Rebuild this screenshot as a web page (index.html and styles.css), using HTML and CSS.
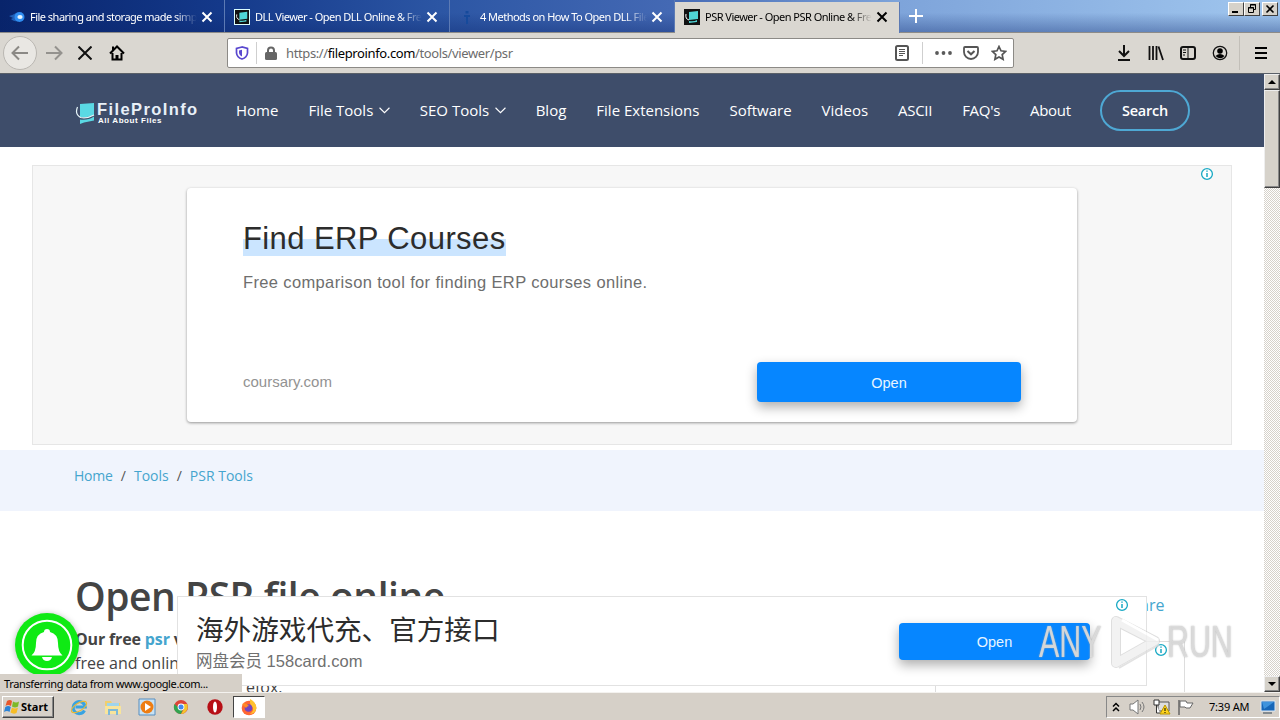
FILE: index.html
```html
<!DOCTYPE html>
<html lang="en">
<head>
<meta charset="utf-8">
<title>PSR Viewer - Open PSR Online</title>
<link rel="stylesheet" href="styles.css">
</head>
<body>
<svg class="defs" width="0" height="0">
  <defs>
    <symbol id="x" viewBox="0 0 12 12"><path d="M1.5 1.5l9 9M10.5 1.5l-9 9" fill="none" stroke="currentColor" stroke-width="2"/></symbol>
    <symbol id="fpi" viewBox="0 0 16 16"><path d="M0 0h16v16H0z" fill="#111"/><path d="M5 3l9-1v8l-9 1zM5 12q5 1 8-1v2l-8 1z" fill="#4fd5d5"/><path d="M2 5q-1 5 3 6" fill="none" stroke="#fff"/></symbol>
    <symbol id="info" viewBox="0 0 14 14"><circle cx="7" cy="7" r="5.4" fill="#fff" stroke="#19a9c4" stroke-width="1.3"/><path d="M7 6v4M7 3.4v1.4" stroke="#19a9c4" stroke-width="1.5"/></symbol>
    <symbol id="chev" viewBox="0 0 10 6"><path d="M.5.5L5 5 9.500.5" fill="none" stroke="#fff"/></symbol>
  </defs>
</svg>

<header class="tabs">
  <div class="tab tab1"><svg class="fav" viewBox="0 0 16 16"><path d="M0 7q4-1 8-3.500l1 9Q4 12 2 10l2-1z" fill="#2060b8"/><circle cx="10.500" cy="8" r="5" fill="#2f8df0"/><ellipse cx="11" cy="8" rx="2.600" ry="2" fill="#e8f6ff"/></svg><span class="title">File sharing and storage made simple</span><svg class="close"><use href="#x"/></svg></div>
  <div class="tab tab2"><svg class="fav framed"><use href="#fpi"/></svg><span class="title">DLL Viewer - Open DLL Online &amp; Free</span><svg class="close"><use href="#x"/></svg></div>
  <div class="tab tab3"><svg class="fav" viewBox="0 0 16 16"><path d="M5 6h6v2h-2v7H7V8H5zM6.500 2h3v2.500h-3z" fill="#164a9c"/></svg><span class="title">4 Methods on How To Open DLL Files</span><svg class="close"><use href="#x"/></svg></div>
  <div class="tab active"><svg class="fav"><use href="#fpi"/></svg><span class="title">PSR Viewer - Open PSR Online &amp; Free</span><svg class="close"><use href="#x"/></svg></div>
  <svg class="plus" viewBox="0 0 14 14"><path d="M7 0v14M0 7h14" stroke="#fff" stroke-width="2"/></svg>
  <div class="winbtns">
    <span class="wb"><svg viewBox="0 0 14 12"><path d="M3 9h6" stroke="#000" stroke-width="2"/></svg></span>
    <span class="wb"><svg viewBox="0 0 14 12"><path d="M5.500 4V1.500h5v5H9M5 2h6M3.500 4.500h5v5h-5zM3 5h6" fill="none" stroke="#000"/></svg></span>
    <span class="wb last"><svg viewBox="0 0 14 12"><path d="M3.500 2.500l7 7M10.500 2.500l-7 7" stroke="#000" stroke-width="1.600"/></svg></span>
  </div>
</header>

<div class="toolbar">
  <span class="back"><svg width="18" height="16" viewBox="0 0 18 16"><path d="M17 8H2M8 1.500L1.500 8 8 14.500" fill="none" stroke="#8b8985" stroke-width="2"/></svg></span>
  <svg class="fwd" width="18" height="16" viewBox="0 0 18 16"><path d="M1 8h15M10 1.500L16.500 8 10 14.500" fill="none" stroke="#94928e" stroke-width="2"/></svg>
  <svg class="stop" width="14" height="14" viewBox="0 0 14 14"><path d="M0.500.5l13 13M13.500.5l-13 13" stroke="#111" stroke-width="2"/></svg>
  <svg class="home" width="16" height="16" viewBox="0 0 16 16"><path d="M1 8.500L8 1.500l7 7M3.500 8v6.500h9V8" fill="none" stroke="#000" stroke-width="2"/><path d="M6.500 15v-5h3v5z"/><path d="M3 1.500h2v4l-2 2z"/></svg>
  <div class="urlbar">
    <svg class="shield" width="14" height="14" viewBox="0 0 14 14"><path d="M7 1L1.500 2.500V7q.5 4.500 5.500 6 5-1.500 5.500-6V2.500z" fill="#fff" stroke="#5a48cf" stroke-width="1.700"/><path d="M7 3.800V10.500Q4 9 4 6V4.500z" fill="#5a48cf"/></svg>
    <span class="vsep"></span>
    <svg class="lock" width="12" height="14" viewBox="0 0 12 14"><path d="M3 7V4.500a3 3 0 016 0V7" fill="none" stroke="#666" stroke-width="2"/><rect y="6" width="12" height="8" rx="1.500" fill="#666"/></svg>
    <span class="url">https://<b>fileproinfo.com</b>/tools/viewer/psr</span>
    <svg class="reader" width="14" height="16" viewBox="0 0 14 16"><rect x="1" y="1" width="12" height="14" rx="1.500" fill="none" stroke="#555" stroke-width="2"/><path d="M4 4.500h6M4 6.500h6M4 8.500h6M4 10.500h4" stroke="#555"/></svg>
    <span class="vsep s2"></span>
    <svg class="dots" width="17" height="4" viewBox="0 0 17 4"><g fill="#5a5a5a"><circle cx="2" cy="2" r="1.900"/><circle cx="8.500" cy="2" r="1.900"/><circle cx="15" cy="2" r="1.900"/></g></svg>
    <svg class="pocket" width="16" height="14" viewBox="0 0 16 14"><path d="M2 1h12q1 0 1 1v4a7 7 0 01-14 0V2q0-1 1-1z" fill="none" stroke="#555" stroke-width="1.800"/><path d="M4.500 5L8 8.300 11.500 5" fill="none" stroke="#555" stroke-width="2"/></svg>
    <svg class="star" width="16" height="16" viewBox="0 0 16 16"><path d="M8 1.500l2 4.300 4.700.6-3.500 3.200.9 4.700L8 12l-4.100 2.300.9-4.700L1.300 6.400 6 5.800z" fill="none" stroke="#555" stroke-width="1.700"/></svg>
  </div>
  <div class="tools">
    <svg width="14" height="16" viewBox="0 0 14 16"><path d="M7 0v11M2 6l5 5 5-5M1 15h12" fill="none" stroke="#111" stroke-width="2"/></svg>
    <svg width="16" height="16" viewBox="0 0 16 16"><path d="M1.500 1v14M5 1v14M8.500 1v14M10.500 1.500L15 15" fill="none" stroke="#111" stroke-width="1.800"/></svg>
    <svg width="16" height="14" viewBox="0 0 16 14"><rect x="1" y="1" width="14" height="12" rx="2" fill="none" stroke="#111" stroke-width="2"/><path d="M8 1v12M3 4h3M3 6.500h3M3 9h2" stroke="#111"/></svg>
    <svg width="16" height="16" viewBox="0 0 16 16"><circle cx="8" cy="8" r="6.700" fill="none" stroke="#111" stroke-width="1.300"/><circle cx="8" cy="6" r="2.800"/><path d="M3.500 11q4.500-4 9 0-4 4.500-9 0z"/></svg>
    <i class="vline"></i>
    <svg width="12" height="12" viewBox="0 0 12 12"><path d="M0 1h12M0 6h12M0 11h12" stroke="#000" stroke-width="2"/></svg>
  </div>
</div>

<div class="viewport">
  <main class="page">
    <nav class="nav">
      <div class="logo">
        <svg width="20" height="22" viewBox="0 0 20 22"><path d="M5 2l14-1v12q-6 3-14 2z" fill="#5ad9e4"/><path d="M5 17.500q8 1 14-3v4q-5 1-10 2l-4 1.500z" fill="#5ad9e4"/><path d="M2.500 5q-3 7 3 10.500 6 1.500 13.500-2.500" fill="none" stroke="#e8f6fa" stroke-width="1.200"/></svg>
        <div class="logotext"><span class="brand">FileProInfo</span><span class="tagline">All About Files</span></div>
      </div>
      <div class="links">
        <a>Home</a><a class="drop">File Tools<svg><use href="#chev"/></svg></a><a class="drop">SEO Tools<svg><use href="#chev"/></svg></a><a>Blog</a><a>File Extensions</a><a>Software</a><a>Videos</a><a class="tight">ASCII</a><a class="tight">FAQ's</a><a class="tight">About</a>
      </div>
      <button class="search">Search</button>
    </nav>
    <section class="adbox">
      <svg class="info adinfo"><use href="#info"/></svg>
      <div class="adcard">
        <h2><span>Find ERP Courses</span></h2>
        <p class="desc">Free comparison tool for finding ERP courses online.</p>
        <div class="adfoot"><span class="domain">coursary.com</span><span class="open">Open</span></div>
      </div>
    </section>
    <div class="crumbs"><a>Home</a><i>/</i><a>Tools</a><i>/</i><a>PSR Tools</a></div>
    <div class="content">
      <article>
        <h1>Open PSR file online</h1>
        <p><b>Our free <em>psr</em> v</b></p>
        <p>free and onlin</p>
        <p class="tail">efox.</p>
      </article>
      <aside>
        <span class="share">are</span>
        <div class="sidead"><svg class="info"><use href="#info"/></svg></div>
      </aside>
    </div>
  </main>
  <div class="scroll">
    <span class="sb"><svg viewBox="0 0 8 4"><path d="M0 4l4-4 4 4z"/></svg></span>
    <span class="thumb"></span>
    <span class="sb end"><svg viewBox="0 0 8 4"><path d="M0 0l4 4 4-4z"/></svg></span>
  </div>

  <div class="sticky">
    <div class="cn"><strong>海外游戏代充、官方接口</strong><span>网盘会员 <b>158card.com</b></span></div>
    <span class="open">Open</span>
    <svg class="info stickyinfo"><use href="#info"/></svg>
  </div>
  <svg class="bell" width="68" height="68" viewBox="0 0 68 68"><circle cx="34" cy="34" r="32" fill="#0fea14"/><circle cx="34" cy="34" r="24.300" fill="none" stroke="#fff" stroke-width="2"/><path d="M34 18q3 0 3 3 8 2 8 11 0 9 4.500 12.500h-31Q23 41 23 32q0-9 8-11 0-3 3-3zM29 46h10q-1 4-5 4t-5-4z" fill="#fff"/></svg>
  <div class="status">Transferring data from www.google.com...</div>
  <div class="watermark"><span>ANY</span><svg width="58" height="62" viewBox="0 0 58 62"><g fill="none" stroke-linejoin="round"><path d="M8 10v42l39-22z" stroke="#c8c8c8" stroke-opacity=".75" stroke-width="10"/><path d="M8 10v42l39-22z" stroke="#f0f0f0" stroke-width="8"/><path d="M11 57l40-23" stroke="#dcdcdc" stroke-width="2"/><path d="M14 9l36 20" stroke="#fff" stroke-width="3"/></g></svg><span class="run">RUN</span></div>
</div>

<footer class="taskbar">
  <span class="start"><svg width="17" height="16" viewBox="0 0 17 16"><path d="M3 2q3-2 5 0L7 7Q4 5 1.500 7z" fill="#e7572b"/><path d="M9 2.500q3 2 6 0L14 7.500q-3 2-6 0z" fill="#7db928"/><path d="M1.300 8q3-2 5.500 0L5.500 13Q3 11 0 13z" fill="#2b83d6"/><path d="M8 8.500q3 2 6 0L12.500 14q-3 1.500-6-.5z" fill="#f7bd26"/></svg>Start</span>
  <div class="launch">
    <svg viewBox="0 0 18 18"><path d="M14.500 12.500a6 6 0 11.700-3.500H5.500" fill="none" stroke="#37a3e2" stroke-width="3"/><ellipse cx="9" cy="9" rx="8.700" ry="3.800" transform="rotate(-32 9 9)" fill="none" stroke="#e6b93a" stroke-width="1.200"/></svg>
    <svg viewBox="0 0 18 18"><path d="M1 3h6l1 2h8v11H1z" fill="#f0cf70"/><path d="M3 5h12v6H3z" fill="#9ed4ec"/><path d="M1 8h16v8H1z" fill="#f8e49b"/><path d="M5 17v-5h8v5" fill="none" stroke="#7eb9d8" stroke-width="2"/></svg>
    <svg viewBox="0 0 18 18"><path d="M1 1h16v16H1z" fill="#c8e2f4" stroke="#578ec0"/><circle cx="9" cy="9" r="6.500" fill="#ee7d12"/><path d="M7 5l6 4-6 4z" fill="#fff"/></svg>
    <svg viewBox="0 0 18 18"><circle cx="9" cy="9" r="7" fill="#dd4438"/><path d="M2.500 6A7 7 0 009 16l2-5-4-1z" fill="#32a350"/><path d="M9 16a7 7 0 006-10H9l3 5z" fill="#f4c72c"/><circle cx="9" cy="9" r="3.400" fill="#fff"/><circle cx="9" cy="9" r="2.500" fill="#4388ef"/></svg>
    <svg viewBox="0 0 18 18"><circle cx="9" cy="9" r="7.700" fill="#b70f16"/><ellipse cx="9" cy="9" rx="2" ry="5.500" fill="#fff"/></svg>
    <span class="pressed"><svg viewBox="0 0 18 18"><circle cx="9" cy="10" r="7.300" fill="#ff6632"/><path d="M10 1q6 3 6.500 9-1 6-7 6 5-3 3-7-3-2-2.500-8z" fill="#ffc22f"/><circle cx="8.500" cy="10" r="3.800" fill="#7345bf"/><path d="M2 6q4-2 7 2-2 0-3 2z" fill="#ff8b25"/></svg></span>
  </div>
  <div class="tray">
    <svg width="8" height="10" viewBox="0 0 8 10"><path d="M1 4.500l3-3 3 3M1 9l3-3 3 3" fill="none" stroke="#000" stroke-width="1.500"/></svg>
    <svg width="18" height="16" viewBox="0 0 18 16"><path d="M1 5h3l5-4v14l-5-4H1z" fill="#fff" stroke="#777"/><path d="M11 5q2 3 0 6M13 3q4 5 0 10" fill="none" stroke="#777"/></svg>
    <svg width="18" height="16" viewBox="0 0 18 16"><path d="M5 3h11v9H5z" fill="#ddd" stroke="#555"/><path d="M1 1h5v5H1zM3.500 6v8H7" fill="#fff" stroke="#333"/><path d="M12 6l5 9H7z" fill="#ffd41c" stroke="#b99500"/><path d="M12 9v3M12 13v1" stroke="#000"/></svg>
    <svg width="17" height="16" viewBox="0 0 17 16"><path d="M2 1v15" stroke="#666" stroke-width="1.500"/><path d="M3 2h6l1 2h6l-3 5H9L8 8H3z" fill="#fff" stroke="#666"/></svg>
    <span>7:39 AM</span>
    <svg width="16" height="14" viewBox="0 0 16 14"><path d="M1 1h14v10H1z" fill="#1766b8" stroke="#dce8f5"/><path d="M2 2h12L4 9z" fill="#3f93dd"/><path d="M3 13h9" stroke="#345"/></svg>
  </div>
</footer>
</body>
</html>
```
FILE: styles.css
```css
* { box-sizing: border-box; }
body { margin: 0; width: 1280px; height: 720px; overflow: hidden; display: flex; flex-direction: column; background: #fff; font-family: "Noto Sans", sans-serif; }
svg { flex: none; display: block; }
.defs { position: absolute; }

/* Tab strip */
.tabs { height: 33px; flex: none; display: flex; color: #fff; border-bottom: 1px solid #8d8b88; background: linear-gradient(180deg, rgba(10,36,106,.0) 40%, rgba(10,36,106,.35)), linear-gradient(90deg, #08246b 0, #14398a 220px, #2c56a4 440px, #4469b4 670px, #7ea4da 900px, #a0c6ee 1280px); }
.tab { width: 225px; padding: 1px 11px 0 9px; display: flex; align-items: center; border-right: 1px solid #5c7ab4; font-size: 11px; }
.tab .fav { width: 16px; height: 16px; margin-right: 5px; }
.tab .framed { border: 1px solid #dff; }
.title { width: 167px; white-space: nowrap; overflow: hidden; letter-spacing: -.52px; -webkit-mask-image: linear-gradient(90deg, #000 145px, transparent 167px); mask-image: linear-gradient(90deg, #000 145px, transparent 167px); }
.close { width: 12px; height: 12px; margin-left: 4px; }
.tab.active { height: 31px; margin-top: 2px; padding: 0 11px 2px 9px; background: #dad7d1; color: #000; box-shadow: 0 1px #dad7d1; }
.plus { width: 14px; height: 14px; margin: 9px 0 0 9px; }
.winbtns { margin-left: auto; display: flex; padding: 2px 2px 0 0; }
.wb { width: 16px; height: 14px; background: #d6d2ca; border: 1px solid; border-color: #fff #404040 #404040 #fff; }
.wb.last { margin-left: 2px; }
.wb svg { width: 14px; height: 12px; }

/* Toolbar */
.toolbar { height: 41px; flex: none; display: flex; align-items: center; background: #dad7d1; border-bottom: 1px solid #5a6068; }
.back { width: 34px; height: 34px; margin-left: 3px; border-radius: 50%; border: 1px solid #bab7b2; background: #e9e7e3; display: flex; align-items: center; justify-content: center; }
.fwd { margin-left: 8px; }
.stop { margin-left: 15px; }
.home { margin-left: 17px; }
.urlbar { width: 787px; height: 30px; margin-left: 102px; background: #fff; border: 1px solid #8c8a86; border-radius: 2px; display: flex; align-items: center; padding-left: 7px; }
.vsep { width: 1px; height: 22px; background: #cfcfcf; margin: 0 8px 0 7px; }
.url { margin-left: 9px; width: 609px; font-size: 13px; color: #6c6c6c; letter-spacing: -.38px; white-space: nowrap; }
.url b { font-weight: 400; color: #000; }
.s2 { margin: 0 12px 0 13px; }
.pocket { margin-left: 11px; }
.star { margin-left: 12px; }
.tools { display: flex; align-items: center; gap: 16px; margin-left: 103px; }
.tools svg:first-child { margin-right: 1px; }
.vline { width: 1px; height: 34px; background: #c2bfb9; margin: 0 -1px 0 -5px; }

/* Page viewport */
.viewport { height: 618px; flex: none; display: flex; position: relative; overflow: hidden; }
.page { width: 1264px; height: 618px; overflow: hidden; font-family: "Open Sans", sans-serif; }
.nav { height: 73px; background: #3e4d6a; display: flex; align-items: center; color: #fff; padding-left: 75px; }
.logo { display: flex; width: 161px; padding-top: 5px; }
.logotext { display: flex; flex-direction: column; font-family: "Liberation Sans", sans-serif; margin-left: 2px; }
.brand { font-size: 16.5px; line-height: 15px; font-weight: 700; letter-spacing: 1.4px; color: #e8f0f8; }
.tagline { font-size: 8px; line-height: 7px; font-weight: 700; letter-spacing: .55px; padding-left: 1px; }
.links { display: flex; gap: 30px; width: 864px; font-size: 15px; line-height: 20px; padding-bottom: 1px; white-space: nowrap; }
.links .tight { letter-spacing: -.3px; }
.drop { display: flex; align-items: center; }
.drop svg { width: 11px; height: 7px; margin-left: 5.500px; }
.search { width: 90px; height: 41px; border: 2px solid #4ea8d4; border-radius: 21px; background: none; color: #fff; font: 600 14.5px "Open Sans", sans-serif; letter-spacing: -.2px; padding: 0; }
.adbox { width: 1200px; height: 280px; margin: 18px 0 0 32px; background: #f7f7f7; border: 1px solid #e6e6e6; padding: 22px 0 0 154px; position: relative; }
.info { width: 14px; height: 14px; }
.adinfo { position: absolute; right: 17px; top: 1px; }
.adcard { width: 890px; height: 234px; background: #fff; border-radius: 4px; box-shadow: 0 1px 3px rgba(0,0,0,.4); padding: 34px 56px 0; font-family: "Liberation Sans", sans-serif; }
.adcard h2 { margin: 0; font-size: 31px; line-height: 34px; height: 34px; font-weight: 400; letter-spacing: .4px; color: #2c2c2c; white-space: nowrap; }
.adcard h2 span { background: linear-gradient(transparent 50%, #cbe5ff 50%); display: inline-block; }
.desc { margin: 16px 0 0; font-size: 16.500px; line-height: 20px; letter-spacing: .36px; color: #6e6e6e; }
.adfoot { display: flex; justify-content: space-between; align-items: center; margin-top: 70px; }
.domain { font-size: 15px; color: #929292; padding-bottom: 2px; }
.open { width: 264px; height: 40px; border-radius: 4px; background: #0686ff; color: #e8f5ff; box-shadow: 0 5px 12px rgba(0,0,0,.32); display: flex; justify-content: center; align-items: center; font: 14.5px "Liberation Sans", sans-serif; }
.adfoot .open { padding-top: 1px; }
.crumbs { height: 61px; margin-top: 5px; background: #f0f4fd; padding: 16px 0 0 74px; font-size: 14px; line-height: 20px; display: flex; gap: 8px; color: #555; }
.crumbs a { color: #45a5ce; }
.crumbs a:first-child { letter-spacing: -.2px; }
.crumbs i { font-style: normal; }
.content { display: flex; }
article { width: 936px; flex: none; padding: 57px 0 0 75px; color: #444; }
h1 { margin: 0 0 4px; font-size: 39px; line-height: 55px; font-weight: 600; letter-spacing: -.45px; }
article p { margin: 0; font-size: 16px; line-height: 24px; }
article b { letter-spacing: -.15px; }
article em { font-style: normal; color: #45a5ce; }
.tail { padding-left: 171px; }
aside { width: 250px; flex: none; margin-left: -1px; padding-top: 82px; font-size: 16px; line-height: 24px; }
.share { display: block; color: #45a5ce; padding-left: 205px; }
.sidead { height: 80px; width: 250px; margin-top: 24px; border: 1px solid #ddd; padding: 1px 0 0 218px; }

/* Scrollbar */
.scroll { width: 16px; background: repeating-conic-gradient(#fff 0 25%, #d6d2ca 0 50%) 0 0/2px 2px; display: flex; flex-direction: column; }
.sb, .thumb { width: 16px; height: 16px; background: #d6d2ca; border: 1px solid; border-color: #eee #404040 #404040 #eee; box-shadow: inset -1px -1px #888; display: flex; align-items: center; justify-content: center; }
.sb svg { width: 8px; height: 4px; }
.thumb { height: 98px; }
.end { margin-top: auto; }

/* Floating items */
.sticky { position: absolute; left: 177px; top: 522px; width: 970px; height: 90px; background: #fff; border: 1px solid #e2e2e2; padding: 0 56px 0 18px; display: flex; justify-content: space-between; }
.cn { display: flex; flex-direction: column; padding-top: 14px; font-family: "Liberation Sans", "Noto Sans CJK SC", sans-serif; white-space: nowrap; }
.cn strong { font-size: 27.6px; line-height: 40px; font-weight: 400; color: #2c2c2c; }
.cn span { font-size: 16.5px; line-height: 20px; color: #707070; }
.cn b { font-weight: 400; letter-spacing: .05px; }
.sticky .open { width: 191px; height: 37px; margin-top: 26px; }
.stickyinfo { position: absolute; left: 937px; top: 1px; }
.bell { position: absolute; left: 13px; top: 537px; filter: drop-shadow(0 1px 3px rgba(0,0,0,.3)); }
.status { position: absolute; left: 0; top: 600px; width: 242px; height: 18px; background: #d6d0c8; font-size: 11px; line-height: 20px; padding-left: 4px; letter-spacing: -.37px; white-space: nowrap; }
.watermark { position: absolute; left: 1039px; top: 537px; display: flex; align-items: center; font: 44px/60px "Liberation Sans", sans-serif; color: rgba(226,226,226,.8); text-shadow: 0 0 2px #aaa; }
.watermark span { display: block; width: 66px; transform: scaleX(.69); transform-origin: 0 50%; }
.watermark svg { margin: 0 1px 0 3px; opacity: .8; }

/* Taskbar */
.taskbar { height: 28px; flex: none; background: #d6d0c8; border-top: 1px solid #f4f2ef; display: flex; align-items: center; padding-left: 2px; font-size: 11px; }
.start { width: 52px; height: 22px; border: 1px solid; border-color: #fff #444 #444 #fff; box-shadow: inset -1px -1px #888; display: flex; align-items: center; font-weight: 700; padding-left: 1px; letter-spacing: 0; }
.launch { display: flex; align-items: center; margin-left: 16px; gap: 16px; }
.launch svg { width: 18px; height: 18px; }
.pressed { width: 32px; height: 22px; background: #fff; border: 1px solid; border-color: #444 #fff #fff #444; padding: 1px 0 0 6px; margin-left: -7px; }
.tray { margin-left: auto; width: 174px; height: 22px; border: 1px solid; border-color: #888 #fff #fff #888; display: flex; align-items: center; padding-left: 5px; white-space: nowrap; }
.tray svg:nth-child(2) { margin-left: 9px; }
.tray svg:nth-child(3), .tray svg:nth-child(4) { margin-left: 6px; }
.tray span { width: 43px; margin: 0 8px 0 15px; letter-spacing: -.2px; }
```
